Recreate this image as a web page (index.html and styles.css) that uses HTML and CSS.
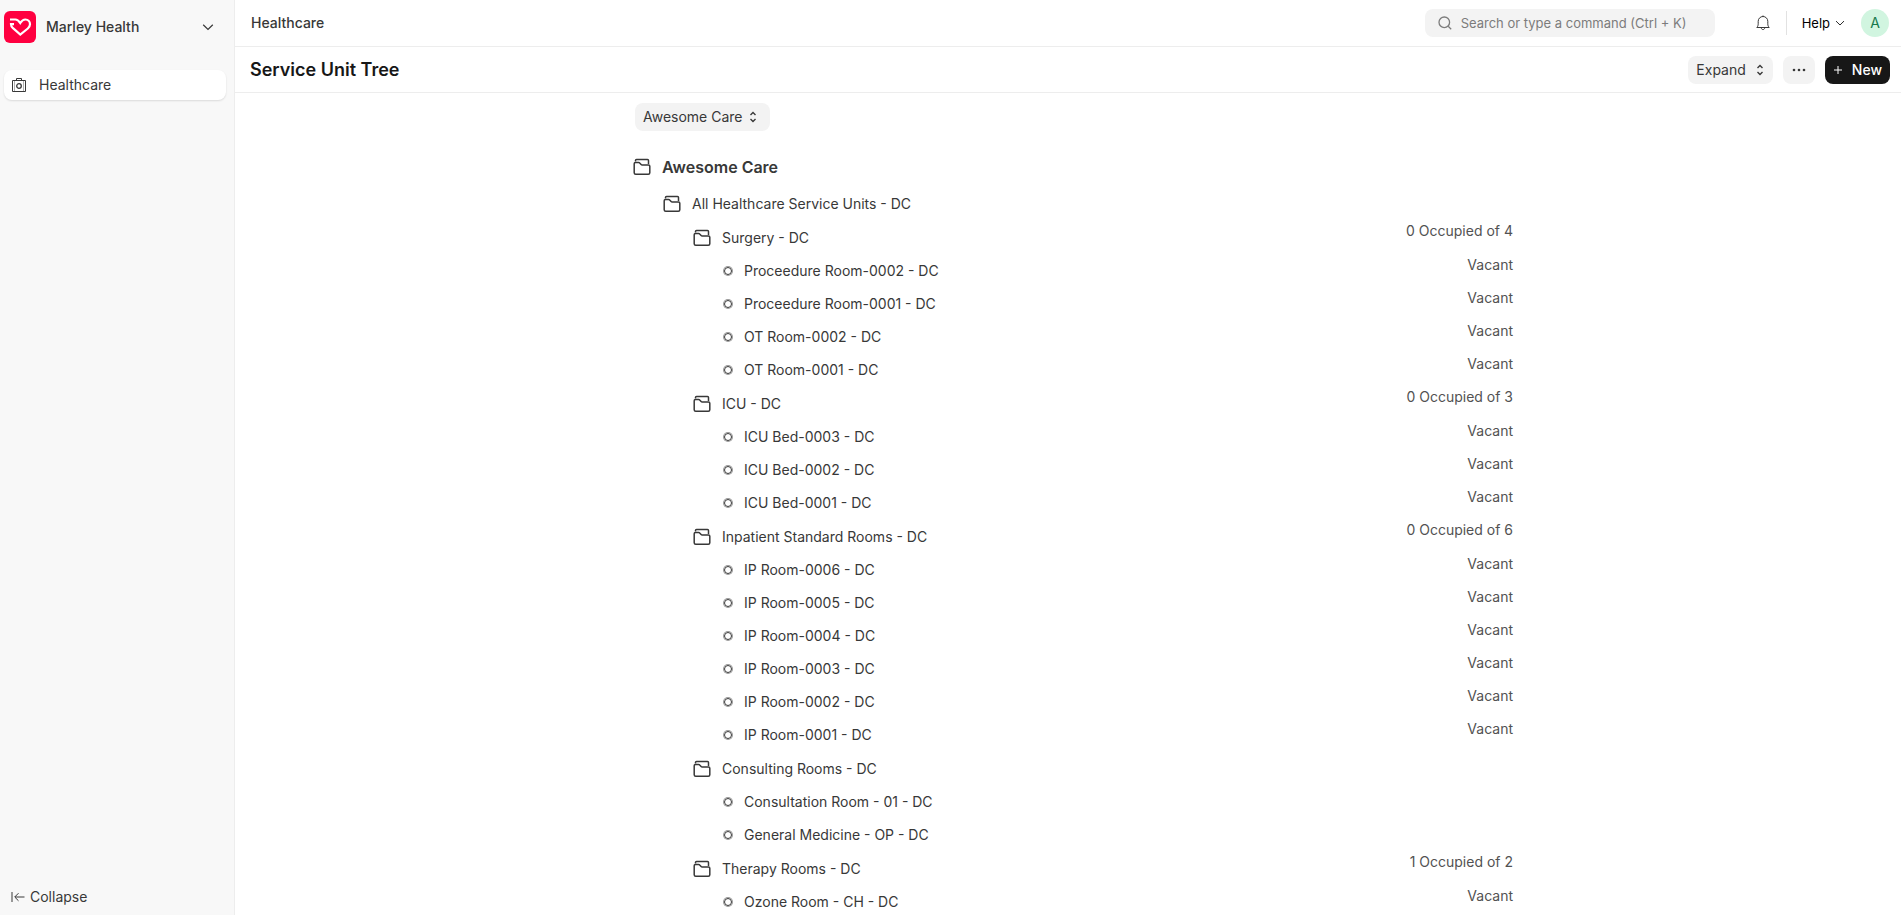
FILE: index.html
```
<!DOCTYPE html>
<html lang="en">
<head>
    <meta charset="UTF-8">
    <meta name="viewport" content="width=device-width, initial-scale=1.0">
    <title>Service Unit Tree</title>
    <link rel="stylesheet" href="styles.css">
</head>
<body>
    <svg class="sprite" aria-hidden="true">
        <symbol id="icon-folder" viewBox="0 0 18 18">
            <path d="M2.500 3.500V2.500q0-1 1-1H14.500q1 0 1 1V6"/>
            <path d="M1.200 5.700q0-1.200 1.200-1.200h3.200q.7 0 1.100.5l1.400 1.500q.4.500 1.100.5h6.400q1.200 0 1.200 1.200v6.600q0 1.500-1.500 1.500H2.700q-1.500 0-1.500-1.500z"/>
        </symbol>
        <symbol id="icon-select" viewBox="0 0 10 12">
            <path d="M2.500 4 5 1.500 7.500 4M2.500 8 5 10.500 7.500 8"/>
        </symbol>
        <symbol id="icon-down" viewBox="0 0 12 12">
            <path d="M1.200 3.700 6 8.400l4.800-4.700"/>
        </symbol>
    </svg>

    <aside class="sidebar">
        <button class="app-switcher">
            <svg class="logo" viewBox="0 0 32 32">
                <rect width="32" height="32" rx="6" fill="#ff0040"/>
                <path d="M6 8.500h5.400c2 0 3.300 1.200 4.900 3.500 1.500-2.300 3-3.500 5-3.500 3 0 4.700 2.200 4.700 4.700 0 1.800-.9 3-2.200 4.300L16.300 23.500 9 17.200C7.700 16 7 14.800 7 13.200H10" fill="none" stroke="#fff" stroke-width="2.200"/>
            </svg>
            <span>Marley Health</span>
            <svg class="icon chevron" viewBox="0 0 12 12"><use href="#icon-down"/></svg>
        </button>
        <nav>
            <a class="nav-item" href="#">
                <svg class="icon" width="14" height="14" viewBox="0 0 14 14">
                    <path d="M.5 2.500h13v11H.5zM4.500 2.500v-2h5v2"/>
                    <path d="M2.500 2.500v11M11.500 2.500v11" stroke-width=".4"/>
                    <circle cx="7" cy="8" r="2.300" stroke-width="1.300"/>
                </svg>
                <span>Healthcare</span>
            </a>
        </nav>
        <button class="collapse">
            <svg class="icon" width="14" height="14" viewBox="0 0 14 14">
                <path d="M1 2v10M13.500 7H4M7.500 3.200 3.700 7l3.800 3.800"/>
            </svg>
            <span>Collapse</span>
        </button>
    </aside>

    <div class="page">
        <header class="topbar">
            <a class="breadcrumb" href="#">Healthcare</a>
            <div class="topbar-right">
                <label class="search">
                    <svg class="icon" width="14" height="14" viewBox="0 0 14 14">
                        <circle cx="6.300" cy="6.300" r="5.300"/>
                        <path d="m10.200 10.200 3 3"/>
                    </svg>
                    <input type="text" placeholder="Search or type a command (Ctrl + K)" aria-label="Search">
                </label>
                <button class="bell" aria-label="Notifications">
                    <svg class="icon" width="16" height="16" viewBox="0 0 16 16">
                        <path d="M1.800 12.500c1-1 1.400-2.200 1.400-3.700V6.300a4.800 4.800 0 0 1 9.600 0v2.500c0 1.500.4 2.700 1.400 3.700zM6.300 12.700c0 2.500 3.400 2.500 3.400 0M8 1.500V.5"/>
                    </svg>
                </button>
                <button class="help">Help <svg class="icon" width="10" height="10" viewBox="0 0 12 12"><use href="#icon-down"/></svg></button>
                <button class="avatar">A</button>
            </div>
        </header>

        <div class="page-head">
            <h1>Service Unit Tree</h1>
            <div class="actions">
                <button class="btn expand">Expand <svg class="icon select" viewBox="0 0 10 12"><use href="#icon-select"/></svg></button>
                <button class="btn menu" aria-label="Menu">
                    <svg width="14" height="4" viewBox="0 0 14 4" fill="#383838"><circle cx="2" cy="2" r="1.300"/><circle cx="7" cy="2" r="1.300"/><circle cx="12" cy="2" r="1.300"/></svg>
                </button>
                <button class="btn primary">
                    <svg class="icon" width="10" height="10" viewBox="0 0 10 10"><path d="M5 1v8M1 5h8"/></svg>
                    New
                </button>
            </div>
        </div>

        <main>
            <div class="container">
                <button class="btn company">Awesome Care <svg class="icon select" viewBox="0 0 10 12"><use href="#icon-select"/></svg></button>
                <ul class="tree" id="tree"></ul>
            </div>
        </main>
    </div>

    <script src="tree.js"></script>
</body>
</html>
```

FILE: styles.css
```
*{
    box-sizing: border-box;
}
body{
    margin: 0;
    display: flex;
    height: 100vh;
    font-family: Inter, "Noto Sans", sans-serif;
    font-size: 14px;
    font-weight: 420;
    line-height: 20px;
    color: #383838;
    background-color: white;
}
a{
    color: inherit;
    text-decoration: none;
}
button{
    font: inherit;
    color: inherit;
    border: none;
    background: none;
    padding: 0;
    cursor: pointer;
}
ul{
    list-style: none;
    margin: 0;
    padding: 0;
}
.sprite{
    display: none;
}
.icon{
    fill: none;
    stroke: currentColor;
    flex-shrink: 0;
}

/* sidebar */
.sidebar{
    display: flex;
    flex-direction: column;
    flex-shrink: 0;
    width: 235px;
    padding: 11px 8px 8px 4px;
    background-color: #f8f8f8;
    border-right: 1px solid #ededed;
}
.app-switcher{
    display: flex;
    align-items: center;
    gap: 10px;
    padding-right: 12px;
    font-weight: 500;
}
.logo{
    width: 32px;
    height: 32px;
}
.chevron{
    width: 12px;
    height: 12px;
    margin-left: auto;
    stroke-width: 1.2;
}
nav{
    margin-top: 27px;
}
.nav-item{
    display: flex;
    align-items: center;
    gap: 13px;
    height: 30px;
    padding: 0 8px;
    border-radius: 8px;
    background-color: white;
    box-shadow: 0 1px 2px rgba(0, 0, 0, 0.12);
}
.collapse{
    display: flex;
    align-items: center;
    gap: 5px;
    margin-top: auto;
    padding-left: 7px;
}

/* top bar */
.page{
    display: flex;
    flex-direction: column;
    flex: 1;
    min-width: 0;
}
.topbar, .page-head{
    display: flex;
    align-items: center;
    justify-content: space-between;
    flex-shrink: 0;
    padding: 0 12px 0 16px;
    border-bottom: 1px solid #ededed;
}
.topbar{
    height: 47px;
}
.page-head{
    height: 46px;
    padding: 0 11px 0 15px;
}
.breadcrumb{
    font-weight: 550;
}
.topbar-right{
    display: flex;
    align-items: center;
}
.search{
    display: flex;
    align-items: center;
    gap: 9px;
    width: 290px;
    height: 28px;
    padding: 0 13px;
    border-radius: 8px;
    background-color: #f3f3f3;
    color: #7c7c7c;
}
.search .icon{
    stroke-width: 1.3;
}
.search input{
    flex: 1;
    min-width: 0;
    padding: 0;
    border: none;
    outline: none;
    background: none;
    font: inherit;
    font-size: 13px;
}
.search input::placeholder{
    color: #7c7c7c;
}
.bell{
    display: flex;
    padding: 4px 15px 4px 40px;
    border-right: 1px solid #e2e2e2;
}
.help{
    display: flex;
    align-items: center;
    gap: 5px;
    margin: 0 16px 0 15px;
    font-size: 13px;
    color: black;
}
.avatar{
    width: 28px;
    height: 28px;
    border-radius: 50%;
    background-color: #d1f5e0;
    color: #16794c;
}
h1{
    margin: 0;
    font-size: 18px;
    font-weight: 600;
    color: #171717;
}
.actions{
    display: flex;
    gap: 10px;
}
.btn{
    display: flex;
    align-items: center;
    justify-content: center;
    height: 28px;
    padding: 0 8px;
    border-radius: 8px;
    background-color: #f3f3f3;
}
.select{
    width: 10px;
    height: 12px;
    stroke-width: 1.4;
}
.expand{
    gap: 9px;
}
.menu{
    width: 32px;
}
.primary{
    gap: 9px;
    background-color: #171717;
    color: white;
    font-weight: 500;
}

/* tree */
main{
    flex: 1;
    min-height: 0;
    overflow-y: auto;
    scrollbar-width: none;
}
.container{
    max-width: 900px;
    margin: 0 auto;
    padding: 10px 5px 0 15px;
}
.company{
    gap: 5px;
    margin-left: 2px;
    padding-right: 12px;
}
.tree{
    margin-top: 18px;
}
.tree ul{
    padding-left: 30px;
}
.row{
    display: flex;
    justify-content: space-between;
    height: 33px;
}
.row.group{
    height: 34px;
}
.row.root{
    height: 37px;
}
.node{
    display: flex;
    align-items: center;
    gap: 11px;
}
.node .folder{
    width: 18px;
    height: 18px;
    stroke-width: 1.5;
}
.node .dot{
    width: 8px;
    height: 8px;
    margin-left: 1px;
    border: 1px solid #383838;
    border-radius: 50%;
    box-shadow: 0 0 0 1px rgba(56, 56, 56, 0.5);
}
.row.group .node{
    padding-top: 2px;
}
.row.leaf .node{
    gap: 12px;
}
.row.root .node{
    padding: 0 0 1px;
    font-size: 16px;
    font-weight: 600;
}
.status{
    line-height: 22px;
    color: #525252;
}
```

FILE: tree.js
```
const units = {
    name: "Awesome Care",
    children: [{
        name: "All Healthcare Service Units - DC",
        children: [
            { name: "Surgery - DC", status: "0 Occupied of 4", children: [
                { name: "Proceedure Room-0002 - DC", status: "Vacant" },
                { name: "Proceedure Room-0001 - DC", status: "Vacant" },
                { name: "OT Room-0002 - DC", status: "Vacant" },
                { name: "OT Room-0001 - DC", status: "Vacant" }
            ]},
            { name: "ICU - DC", status: "0 Occupied of 3", children: [
                { name: "ICU Bed-0003 - DC", status: "Vacant" },
                { name: "ICU Bed-0002 - DC", status: "Vacant" },
                { name: "ICU Bed-0001 - DC", status: "Vacant" }
            ]},
            { name: "Inpatient Standard Rooms - DC", status: "0 Occupied of 6", children: [
                { name: "IP Room-0006 - DC", status: "Vacant" },
                { name: "IP Room-0005 - DC", status: "Vacant" },
                { name: "IP Room-0004 - DC", status: "Vacant" },
                { name: "IP Room-0003 - DC", status: "Vacant" },
                { name: "IP Room-0002 - DC", status: "Vacant" },
                { name: "IP Room-0001 - DC", status: "Vacant" }
            ]},
            { name: "Consulting Rooms - DC", children: [
                { name: "Consultation Room - 01 - DC" },
                { name: "General Medicine - OP - DC" }
            ]},
            { name: "Therapy Rooms - DC", status: "1 Occupied of 2", children: [
                { name: "Ozone Room - CH - DC", status: "Vacant" }
            ]}
        ]
    }]
}

const folder = `<svg class="icon folder" viewBox="0 0 18 18"><use href="#icon-folder"/></svg>`

function renderNode(unit, root) {
    const type = unit.children ? "group" : "leaf"
    const icon = unit.children ? folder : `<span class="dot"></span>`
    const children = unit.children ? `<ul>${unit.children.map(child => renderNode(child)).join("")}</ul>` : ""

    return `<li>
        <div class="row ${type}${root ? " root" : ""}">
            <a class="node" href="#">${icon}<span>${unit.name}</span></a>
            <span class="status">${unit.status || ""}</span>
        </div>
        ${children}
    </li>`
}

document.getElementById("tree").innerHTML = renderNode(units, true)
```
